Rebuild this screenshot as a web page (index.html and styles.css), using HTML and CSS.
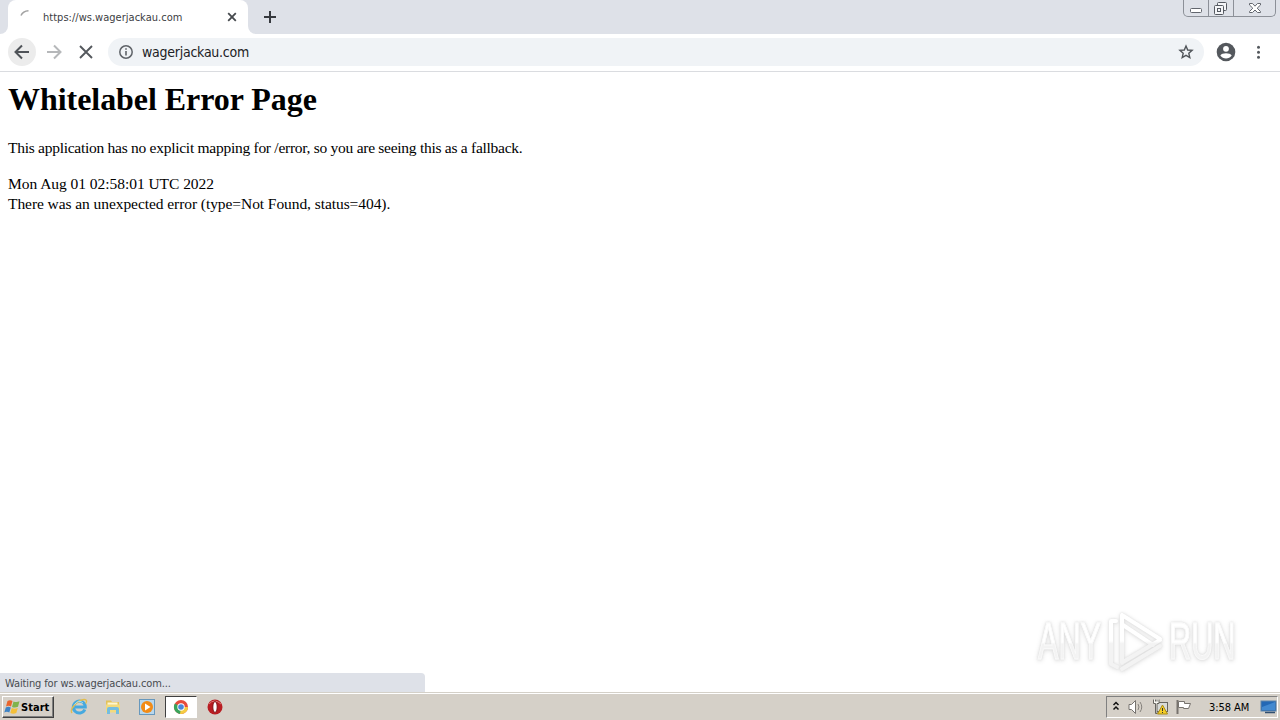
FILE: index.html
```html
<!DOCTYPE html>
<html lang="en">
<head>
<meta charset="UTF-8" />
<meta name="viewport" content="width=device-width, initial-scale=1" />
<title>wagerjackau.com</title>
<link rel="stylesheet" href="styles.css">
</head>
<body>

<header class="tab-strip">
  <div class="tab-edge"></div>
  <div class="tab">
    <svg class="spinner" width="16" height="16" viewBox="0 0 16 16"><path d="M1 6.500Q3 2 8.500 1.700" fill="none" stroke="#a2a2a2" stroke-width="1.600"/></svg>
    <span class="tab-title">https://ws.wagerjackau.com</span>
    <svg width="16" height="16" viewBox="0 0 16 16"><path d="M4.200 4.200l7.600 7.600M11.800 4.200l-7.600 7.600" stroke="#45494d" stroke-width="1.800"/></svg>
  </div>
  <div class="tab-rest">
    <svg width="16" height="16" viewBox="0 0 16 16"><path d="M8 2v12M2 8h12" stroke="#36393e" stroke-width="2"/></svg>
    <div class="window-buttons">
      <span><svg width="24" height="16" viewBox="0 0 24 16"><rect x="6.500" y="8.500" width="11" height="4" rx="1" fill="#fff" stroke="#62666e"/></svg></span>
      <span><svg width="24" height="16" viewBox="0 0 24 16"><g fill="#f4f5f8" stroke="#555961"><rect x="8.500" y="2.500" width="9" height="8" rx="1"/><rect x="5.500" y="5.500" width="9" height="9" rx="1"/><rect x="8.500" y="8.500" width="3" height="3"/></g></svg></span>
      <span><svg width="41" height="16" viewBox="0 0 41 16"><path d="M15.500 3.500h3l2.500 2.700 2.500-2.700h3v1.500L23.200 8.200l3.300 3.300v1h-3L21 10l-2.500 2.500h-3v-1l3.300-3.300-3.300-3.200z" fill="#fff" stroke="#62666e"/></svg></span>
    </div>
  </div>
</header>

<nav class="toolbar">
  <span class="nav-button active"><svg width="28" height="28" viewBox="0 0 28 28"><path d="M21 14H8M14 7.500L7.500 14l6.500 6.500" fill="none" stroke="#4f5358" stroke-width="2"/></svg></span>
  <span class="nav-button"><svg width="28" height="28" viewBox="0 0 28 28"><path d="M7 14h13M14 7.500l6.500 6.500-6.500 6.500" fill="none" stroke="#b6b8ba" stroke-width="2"/></svg></span>
  <span class="nav-button"><svg width="28" height="28" viewBox="0 0 28 28"><path d="M8 8l12 12M20 8L8 20" stroke="#54585d" stroke-width="1.900"/></svg></span>
  <div class="address">
    <svg width="16" height="16" viewBox="0 0 16 16"><circle cx="8" cy="8" r="6.200" fill="none" stroke="#5f6368" stroke-width="1.500"/><path d="M8 7v4.500M8 4.200v1.600" stroke="#5f6368" stroke-width="1.600"/></svg>
    <span class="url">wagerjackau.com</span>
    <svg width="18" height="18" viewBox="0 0 18 18"><path d="M9 3l1.700 4 4.400.4-3.300 2.900 1 4.200L9 12.300l-3.800 2.200 1-4.200-3.300-2.900 4.400-.4z" fill="none" stroke="#505459" stroke-width="1.400"/></svg>
  </div>
  <svg class="profile" width="20" height="20" viewBox="0 0 20 20"><circle cx="10" cy="10" r="9.300" fill="#54585d"/><circle cx="10" cy="6.800" r="2.900" fill="#fff"/><path d="M4.300 13.400c1.500-3 9.900-3 11.400 0-2.600 4-8.800 4-11.400 0z" fill="#fff"/></svg>
  <svg class="menu" width="16" height="16" viewBox="0 0 16 16"><g fill="#54585d"><circle cx="8.500" cy="3.200" r="1.500"/><circle cx="8.500" cy="8.200" r="1.500"/><circle cx="8.500" cy="13.200" r="1.500"/></g></svg>
</nav>

<main class="page">
  <h1>Whitelabel Error Page</h1>
  <p>This application has no explicit mapping for /error, so you are seeing this as a fallback.</p>
  <div class="created">Mon Aug 01 02:58:01 UTC 2022</div>
  <div class="error">There was an unexpected error (type=Not Found, status=404).</div>

  <div class="watermark">
    <div class="mark"><span>ANY</span></div>
    <svg width="60" height="64" viewBox="0 0 60 64">
      <defs>
        <linearGradient id="fade" gradientUnits="userSpaceOnUse" x1="0" y1="0" x2="0" y2="64">
          <stop offset="0.500" stop-color="#fff"/>
          <stop offset="0.540" stop-color="#f3f3f3"/>
        </linearGradient>
      </defs>
      <g fill="none" stroke="url(#fade)" stroke-width="4" stroke-linejoin="round" stroke-linecap="round"><path d="M17 6v48M17 6l38 24M18 16l30 20M11 12H6v43l6 3M55 31L18 53M55 37L17 60"/></g>
    </svg>
    <div class="mark"><span>RUN</span></div>
  </div>
  <div class="status-bubble"><span>Waiting for ws.wagerjackau.com...</span></div>
</main>

<footer class="taskbar">
  <div class="start">
    <svg width="17" height="16" viewBox="0 0 17 16"><path d="M3.500 2Q6 .5 8.500 2L7 7.500Q4.500 6 2 7.500z" fill="#e9652c"/><path d="M9.500 2.500q3 1.200 6-.2L14 7.700q-3 1.500-6 .2z" fill="#80b34b"/><path d="M1.800 8.500q2.500-1.500 5 0l-1.500 5q-2.500-1.400-5 0z" fill="#3e83c5"/><path d="M7.800 9q3 1.300 6-.1L12.300 14q-3 1.600-6 .1z" fill="#f4bf38"/></svg>
    <b>Start</b>
  </div>
  <div class="launcher">
    <span class="task"><svg width="18" height="18" viewBox="0 0 18 18"><path d="M14.800 11.500A6 6 0 1 1 15.300 9H5" fill="none" stroke="#46a9df" stroke-width="3"/><path d="M2 15C-1 11 8 2 14 1.500c3-.2 3 1.800 1.700 4" fill="none" stroke="#e2bd4f" stroke-width="1.400"/><path d="M4.500 6.500Q9 1 13 5" fill="none" stroke="#a1def4"/></svg></span>
    <span class="task"><svg width="18" height="18" viewBox="0 0 18 18"><path d="M2 2.500h5l1 1.500h7v10H2z" fill="#e3c25a"/><path d="M3.500 4.500h10v3h-10z" fill="#fff6ce"/><path d="M2 6.500h14v8H2z" fill="#f3da7c"/><path d="M3 16V11q0-2 2-2h8q2 0 2 2v5h-3v-4H6v4z" fill="#74bde0"/></svg></span>
    <span class="task"><svg width="18" height="18" viewBox="0 0 18 18"><rect x="1.500" y="1.500" width="15" height="15" fill="#b8d7ed" stroke="#6798bd"/><circle cx="9" cy="9" r="6" fill="#f28b16"/><path d="M7 5.500L12.500 9 7 12.500z" fill="#fff"/></svg></span>
    <span class="task pressed"><svg width="18" height="18" viewBox="0 0 18 18"><circle cx="9" cy="9" r="7" fill="#e64b3b"/><path d="M9 9L2.900 5.500A7 7 0 0 0 9 16z" fill="#38a45b"/><path d="M9 9h7a7 7 0 0 1-7 7l-1 0z" fill="#f4cc42"/><circle cx="9" cy="9" r="3.700" fill="#fff"/><circle cx="9" cy="9" r="2.800" fill="#4886db"/></svg></span>
    <span class="task"><svg width="18" height="18" viewBox="0 0 18 18"><circle cx="9" cy="9" r="7.500" fill="#b91d22"/><path d="M3 6q5-6 12 0" fill="none" stroke="#dc7774"/><ellipse cx="9" cy="9" rx="2.200" ry="5.500" fill="#fff" stroke="#811014"/></svg></span>
  </div>
  <div class="tray">
    <svg width="10" height="16" viewBox="0 0 10 16"><path d="M2.500 6l2.500-2.500L7.500 6M2.500 10.500L5 8l2.500 2.500" fill="none" stroke="#111" stroke-width="1.500"/></svg>
    <svg width="18" height="18" viewBox="0 0 18 18"><path d="M2 6.500h2.500l4-4v13l-4-4H2z" fill="#fff" stroke="#76736f"/><path d="M11 6q2 3 0 6M13 4q3.500 5 0 10" fill="none" stroke="#85817c"/></svg>
    <svg width="18" height="18" viewBox="0 0 18 18"><rect x="5.500" y="4.500" width="11" height="9" fill="#d9dbd8" stroke="#66645f"/><path d="M2.500 1.500v4h2v10h1.500v-10h2v-4M4.500 1.500v2M6 1.500v2" fill="#f9f9f4" stroke="#66645f"/><path d="M11.500 7l5 9h-10z" fill="#f5ce27" stroke="#a98a15"/><path d="M11.500 10v3M11.500 14v1" stroke="#333"/></svg>
    <svg width="18" height="18" viewBox="0 0 18 18"><path d="M2.500 2v14" stroke="#77736e" stroke-width="2"/><path d="M3.500 3.500h6v2h6l-2 5H8.500v-1h-5z" fill="#fff" stroke="#77736e"/></svg>
    <span class="clock">3:58 AM</span>
    <svg class="desktop" width="17" height="16" viewBox="0 0 17 16"><rect x="1" y="2" width="15" height="10" fill="#2368b5" stroke="#5e84a9"/><path d="M2 8l13-5v8H2z" fill="#4289d0"/><path d="M5 13.500h10" stroke="#304f70" stroke-width="1.500"/></svg>
  </div>
</footer>

</body>
</html>
```
FILE: styles.css
```css
* {
  box-sizing: border-box;
}
body {
  margin: 0;
  width: 1280px;
  height: 720px;
  overflow: hidden;
  display: flex;
  flex-direction: column;
  background: #fff;
  font-family: "DejaVu Sans Condensed", "DejaVu Sans", sans-serif;
}
svg {
  display: block;
  flex-shrink: 0;
}
span {
  white-space: nowrap;
}

/* Browser chrome */
.tab-strip {
  height: 34px;
  display: flex;
  background: #fff;
}
.tab-edge {
  width: 8px;
  background: #dee1e8;
  border-bottom-right-radius: 8px;
}
.tab {
  width: 240px;
  display: flex;
  align-items: center;
  padding: 0 8px 0 12px;
  background: #dee1e8;
  position: relative;
  z-index: 0;
}
.tab::before {
  content: "";
  position: absolute;
  inset: 0;
  z-index: -1;
  background: #fff;
  border-radius: 8px 8px 0 0;
}
.tab-title {
  flex: 1;
  margin-left: 7px;
  font-size: 11px;
  letter-spacing: 0.02px;
  color: #3c4043;
}
.tab-rest {
  flex: 1;
  display: flex;
  align-items: center;
  justify-content: space-between;
  padding: 0 4px 0 14px;
  background: #dee1e8;
  border-bottom-left-radius: 8px;
}
.window-buttons {
  display: flex;
  align-self: flex-start;
  height: 17px;
  border: 1px solid #8c9098;
  border-top: 0;
  border-radius: 0 0 5px 5px;
}
.window-buttons span + span {
  border-left: 1px solid #8c9098;
}
.toolbar {
  height: 38px;
  display: flex;
  align-items: center;
  padding: 0 14px 2px 8px;
  border-bottom: 1px solid #dadce0;
}
.nav-button {
  width: 28px;
  height: 28px;
  margin-right: 4px;
  border-radius: 50%;
}
.nav-button.active {
  background: #ececec;
}
.address {
  flex: 1;
  height: 28px;
  margin-left: 4px;
  display: flex;
  align-items: center;
  padding: 0 9px 0 10px;
  border-radius: 14px;
  background: #f0f3f6;
}
.url {
  flex: 1;
  margin-left: 8px;
  font-size: 14px;
  letter-spacing: -0.25px;
  color: #202124;
}
.profile {
  margin-left: 12px;
}
.menu {
  margin-left: 14px;
}

/* Error page */
.page {
  flex: 1;
  position: relative;
  padding: 8px;
  font-family: "Liberation Serif", serif;
  font-size: 15.5px;
  line-height: 20px;
  color: #000;
}
h1 {
  margin: 0;
  font-size: 32px;
  line-height: 38px;
  letter-spacing: -0.05px;
}
p {
  margin: 20px 0 16px;
  letter-spacing: -0.27px;
}
.created {
  letter-spacing: -0.04px;
}
.error {
  letter-spacing: -0.07px;
}
.watermark {
  position: absolute;
  right: 48px;
  bottom: 19px;
  display: flex;
  align-items: center;
  gap: 4px;
  font-family: "Liberation Sans", sans-serif;
  font-size: 52px;
  line-height: 62px;
  filter: drop-shadow(0 0 1px #ddd) drop-shadow(0 1px 2px #e4e4e4);
}
.mark {
  width: 63px;
}
.mark span {
  display: inline-block;
  transform: scaleX(0.59);
  transform-origin: left;
  background: linear-gradient(#fff 52%, #f3f3f3 55%);
  -webkit-background-clip: text;
  background-clip: text;
  -webkit-text-stroke: 1px #fafafa;
  color: transparent;
}
.status-bubble {
  position: absolute;
  left: 0;
  bottom: 0;
  width: 425px;
  height: 19px;
  padding-left: 5px;
  border-top-right-radius: 4px;
  background: #dee1e8;
  font-family: "DejaVu Sans Condensed", sans-serif;
  font-size: 11px;
  letter-spacing: -0.12px;
  line-height: 21px;
  color: #484b50;
}

/* Windows taskbar */
.taskbar {
  height: 28px;
  display: flex;
  align-items: center;
  padding: 1px 2px 0;
  background: #d5d0c8;
  border-top: 1px solid #d4d0c8;
  box-shadow: inset 0 1px #fff;
}
.start {
  width: 52px;
  height: 22px;
  display: flex;
  align-items: center;
  padding-left: 1px;
  border: 1px solid;
  border-color: #fff #404040 #404040 #fff;
  box-shadow: inset -1px -1px #808080;
  font-size: 11px;
  color: #000;
}
.start b {
  letter-spacing: 0.05px;
}
.launcher {
  display: flex;
  margin-left: 9px;
  gap: 2px;
}
.task {
  width: 32px;
  height: 22px;
  display: flex;
  align-items: center;
  justify-content: center;
}
.pressed {
  background: #fff;
  border: 1px solid;
  border-color: #404040 #fff #fff #404040;
}
.tray {
  width: 172px;
  height: 22px;
  margin-left: auto;
  display: flex;
  align-items: center;
  padding-left: 4px;
  gap: 6px;
  border: 1px solid;
  border-color: #808080 #fff #fff #808080;
}
.clock {
  margin-left: 10px;
  font-size: 11px;
  letter-spacing: -0.05px;
  color: #000;
}
.desktop {
  margin-left: auto;
}
```
